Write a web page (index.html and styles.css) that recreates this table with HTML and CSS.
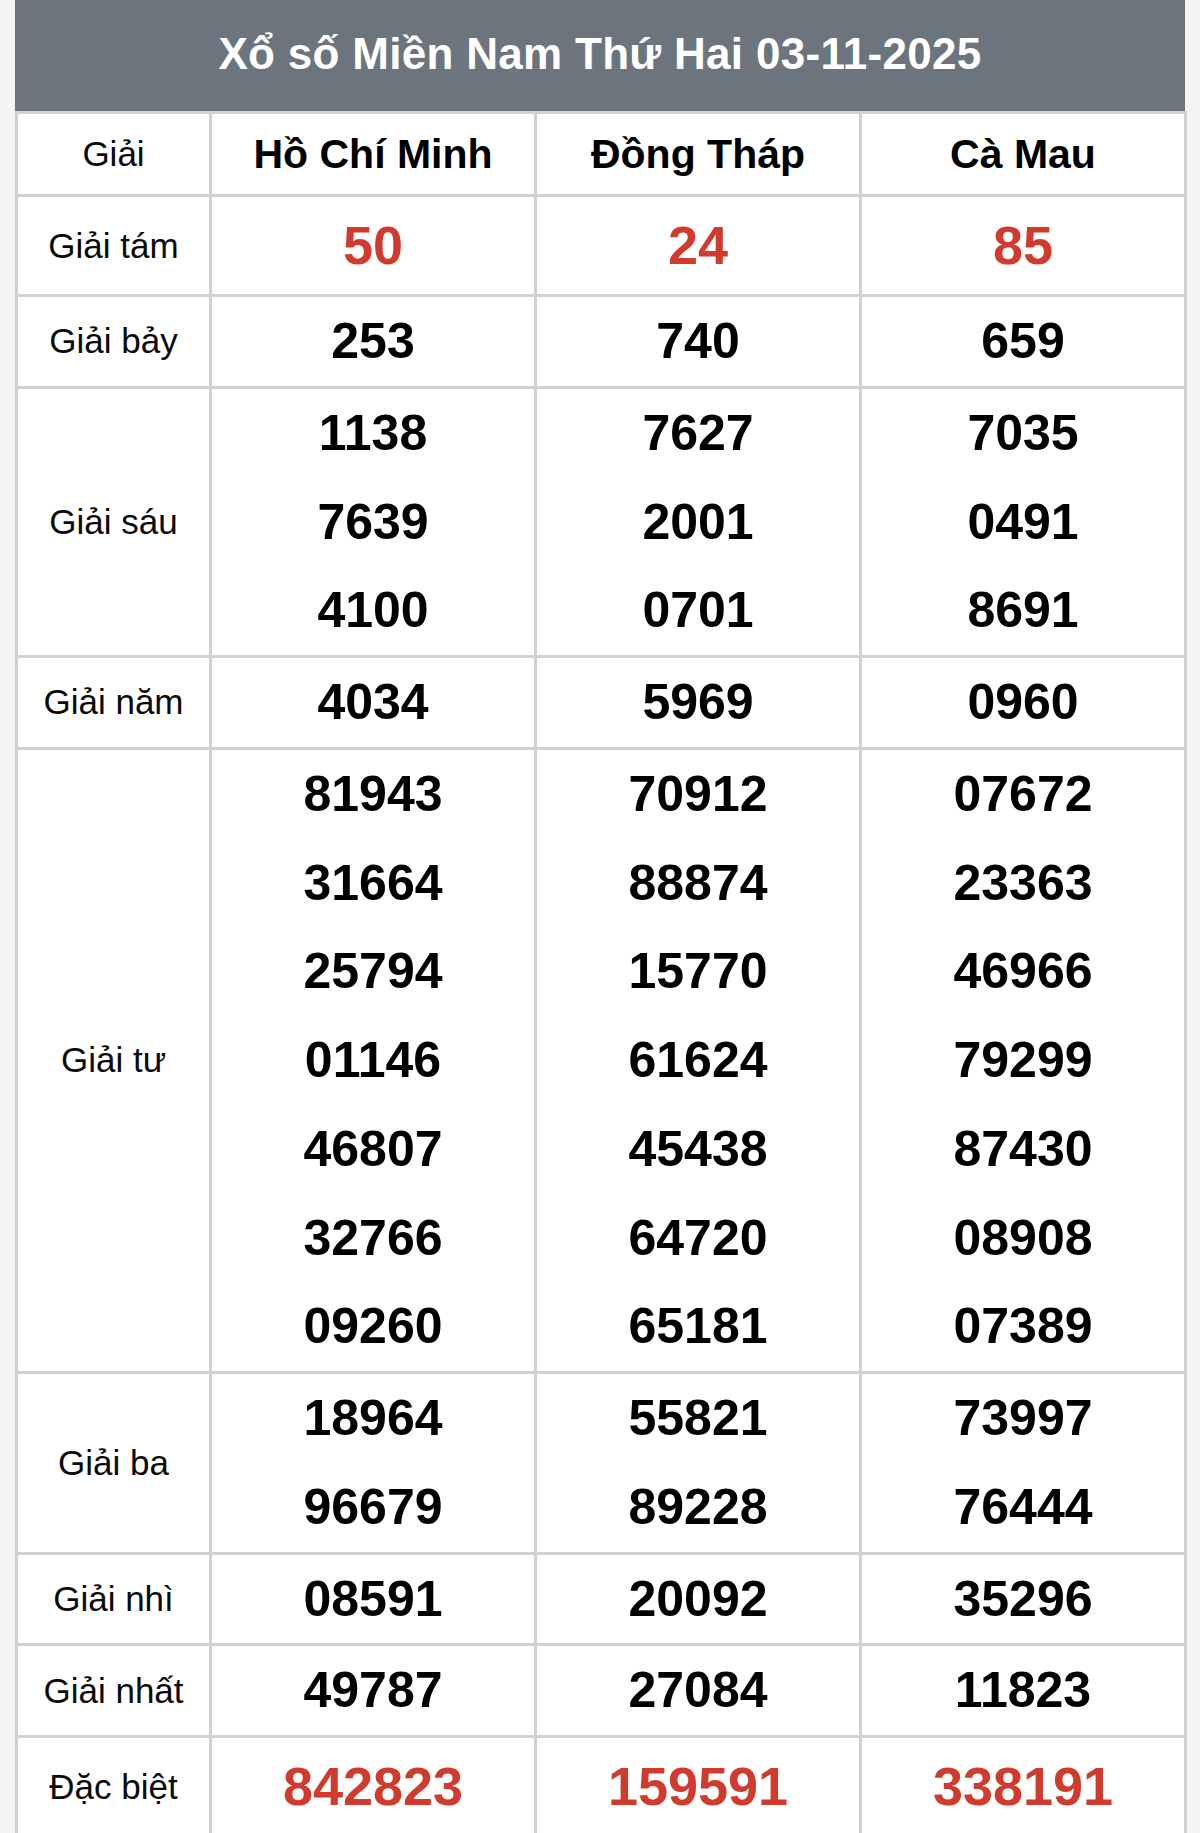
FILE: index.html
```html
<!DOCTYPE html>
<html lang="vi">
<head>
<meta charset="utf-8">
<title>Xổ số Miền Nam Thứ Hai 03-11-2025</title>
<link rel="stylesheet" href="styles.css">
</head>
<body>
<div class="page">
  <div class="title">Xổ số Miền Nam Thứ Hai 03-11-2025</div>
  <table class="kq">
    <colgroup>
      <col class="c-label">
      <col class="c-prov">
      <col class="c-prov">
      <col class="c-prov">
    </colgroup>
    <thead>
      <tr class="head">
        <th class="label">Giải</th>
        <th class="prov">Hồ Chí Minh</th>
        <th class="prov">Đồng Tháp</th>
        <th class="prov">Cà Mau</th>
      </tr>
    </thead>
    <tbody>
      <tr class="big">
        <td class="label">Giải tám</td>
        <td><div class="n red">50</div></td>
        <td><div class="n red">24</div></td>
        <td><div class="n red">85</div></td>
      </tr>
      <tr>
        <td class="label">Giải bảy</td>
        <td><div class="n">253</div></td>
        <td><div class="n">740</div></td>
        <td><div class="n">659</div></td>
      </tr>
      <tr>
        <td class="label">Giải sáu</td>
        <td><div class="n">1138</div><div class="n">7639</div><div class="n">4100</div></td>
        <td><div class="n">7627</div><div class="n">2001</div><div class="n">0701</div></td>
        <td><div class="n">7035</div><div class="n">0491</div><div class="n">8691</div></td>
      </tr>
      <tr>
        <td class="label">Giải năm</td>
        <td><div class="n">4034</div></td>
        <td><div class="n">5969</div></td>
        <td><div class="n">0960</div></td>
      </tr>
      <tr>
        <td class="label">Giải tư</td>
        <td><div class="n">81943</div><div class="n">31664</div><div class="n">25794</div><div class="n">01146</div><div class="n">46807</div><div class="n">32766</div><div class="n">09260</div></td>
        <td><div class="n">70912</div><div class="n">88874</div><div class="n">15770</div><div class="n">61624</div><div class="n">45438</div><div class="n">64720</div><div class="n">65181</div></td>
        <td><div class="n">07672</div><div class="n">23363</div><div class="n">46966</div><div class="n">79299</div><div class="n">87430</div><div class="n">08908</div><div class="n">07389</div></td>
      </tr>
      <tr>
        <td class="label">Giải ba</td>
        <td><div class="n">18964</div><div class="n">96679</div></td>
        <td><div class="n">55821</div><div class="n">89228</div></td>
        <td><div class="n">73997</div><div class="n">76444</div></td>
      </tr>
      <tr>
        <td class="label">Giải nhì</td>
        <td><div class="n">08591</div></td>
        <td><div class="n">20092</div></td>
        <td><div class="n">35296</div></td>
      </tr>
      <tr>
        <td class="label">Giải nhất</td>
        <td><div class="n">49787</div></td>
        <td><div class="n">27084</div></td>
        <td><div class="n">11823</div></td>
      </tr>
      <tr class="big">
        <td class="label">Đặc biệt</td>
        <td><div class="n red">842823</div></td>
        <td><div class="n red">159591</div></td>
        <td><div class="n red">338191</div></td>
      </tr>
    </tbody>
  </table>
</div>
</body>
</html>
```

FILE: styles.css
```css
html, body {
  margin: 0;
  padding: 0;
  background: #f4f4f4;
}

.page {
  height: 1833px;
  overflow: hidden;
  padding: 0 15px;
  font-family: "Liberation Sans", Arial, sans-serif;
  color: #000;
}

.title {
  height: 111px;
  line-height: 108px;
  background: #6c757d;
  color: #fff;
  text-align: center;
  font-weight: bold;
  font-size: 44px;
  letter-spacing: 0.3px;
}

.kq {
  width: 100%;
  table-layout: fixed;
  border-collapse: collapse;
  background: #fff;
}

.c-label { width: 194px; }
.c-prov { width: 325px; }

.kq th,
.kq td {
  border: 3px solid #d2d2d2;
  padding: 0;
  text-align: center;
  vertical-align: middle;
}

.kq tr:last-child td {
  border-bottom: 0;
}

.head th {
  height: 80px;
}

.label {
  font-size: 35px;
  font-weight: normal;
  color: #0a0a0a;
}

.prov {
  font-size: 41px;
  font-weight: bold;
}

.n {
  height: 88.75px;
  line-height: 88.75px;
  font-size: 50px;
  font-weight: bold;
}

.big .n {
  height: 97px;
  line-height: 97px;
}

.n.red {
  color: #d13b2d;
  font-size: 54px;
}
```
